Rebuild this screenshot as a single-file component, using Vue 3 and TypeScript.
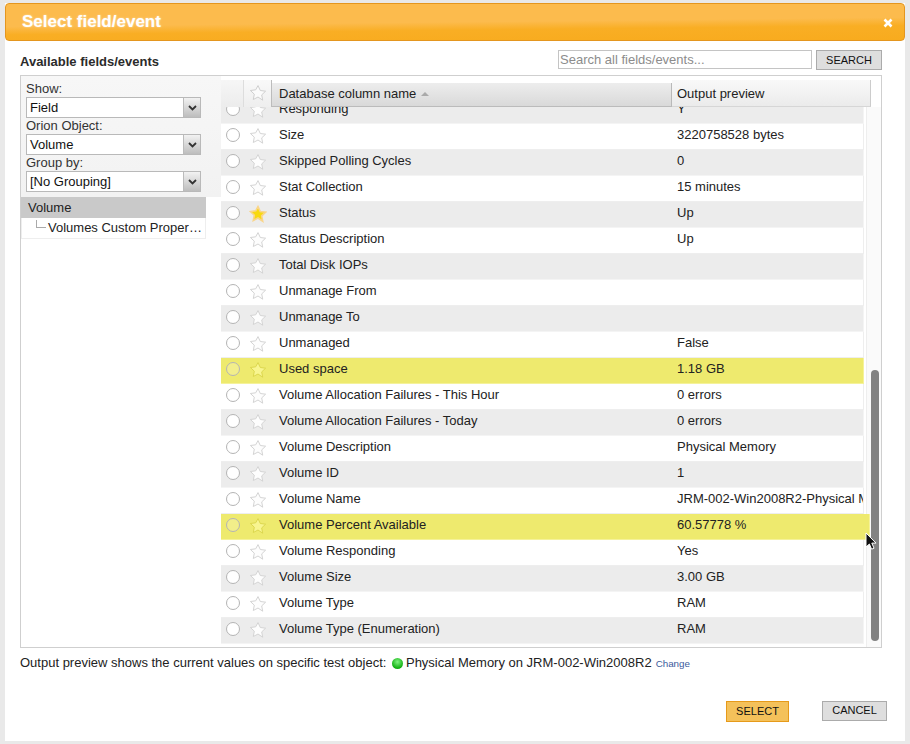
<script setup lang="ts">
interface Row { name: string; value: string; hl?: boolean; wide?: boolean; fav?: boolean }
const rows: Row[] = [
  { name: 'Responding', value: 'Y' },
  { name: 'Size', value: '3220758528 bytes' },
  { name: 'Skipped Polling Cycles', value: '0' },
  { name: 'Stat Collection', value: '15 minutes' },
  { name: 'Status', value: 'Up', fav: true },
  { name: 'Status Description', value: 'Up' },
  { name: 'Total Disk IOPs', value: '' },
  { name: 'Unmanage From', value: '' },
  { name: 'Unmanage To', value: '' },
  { name: 'Unmanaged', value: 'False' },
  { name: 'Used space', value: '1.18 GB', hl: true },
  { name: 'Volume Allocation Failures - This Hour', value: '0 errors' },
  { name: 'Volume Allocation Failures - Today', value: '0 errors' },
  { name: 'Volume Description', value: 'Physical Memory' },
  { name: 'Volume ID', value: '1' },
  { name: 'Volume Name', value: 'JRM-002-Win2008R2-Physical Memory' },
  { name: 'Volume Percent Available', value: '60.57778 %', hl: true, wide: true },
  { name: 'Volume Responding', value: 'Yes' },
  { name: 'Volume Size', value: '3.00 GB' },
  { name: 'Volume Type', value: 'RAM' },
  { name: 'Volume Type (Enumeration)', value: 'RAM' },
]
const filters = [
  { label: 'Show:', value: 'Field' },
  { label: 'Orion Object:', value: 'Volume' },
  { label: 'Group by:', value: '[No Grouping]' },
]
const star = 'M9 1.6l2.3 4.9 5.3.7-3.9 3.7 1 5.3L9 13l-4.7 2.5 1-5.3-3.9-3.7 5.3-.7z'
</script>

<template>
  <div class="page">
    <div class="dialog">
      <header class="title">
        <h1>Select field/event</h1>
        <svg class="close" width="10" height="10" viewBox="0 0 10 10"><path d="M1.5 1.5l7 7M8.5 1.5l-7 7" stroke="#fff" stroke-width="2.6" /></svg>
      </header>

      <div class="toolbar">
        <h2>Available fields/events</h2>
        <input class="search" placeholder="Search all fields/events..." />
        <button class="btn search-btn">SEARCH</button>
      </div>

      <div class="panel">
        <aside class="side">
          <div class="filters">
            <div v-for="f in filters" :key="f.label" class="filter">
              <label>{{ f.label }}</label>
              <div class="select">
                <span>{{ f.value }}</span>
                <i class="arrow">
                  <svg width="9" height="6" viewBox="0 0 9 6"><path d="M1 1l3.5 3.5L8 1" fill="none" stroke="#333" stroke-width="1.8" /></svg>
                </i>
              </div>
            </div>
          </div>
          <div class="tree">
            <div class="tree-root">Volume</div>
            <div class="tree-child">
              <span class="elbow"></span>
              <span>Volumes Custom Proper…</span>
            </div>
          </div>
        </aside>

        <section class="grid">
          <div class="head">
            <div class="hc hc-radio"></div>
            <div class="hc hc-star">
              <svg width="18" height="18" viewBox="0 0 18 18"><path :d="star" fill="#fbfbfb" stroke="#cfcfcf" /></svg>
            </div>
            <div class="hc hc-name">Database column name <span class="sort"></span></div>
            <div class="hc hc-out">Output preview</div>
          </div>
          <div class="body">
            <div class="rows">
              <div
                v-for="(r, i) in rows"
                :key="r.name"
                class="row"
                :class="{ odd: i % 2 === 0, hl: r.hl, wide: r.wide }"
              >
                <span class="radio"></span>
                <span class="star-cell">
                  <svg width="18" height="18" viewBox="0 0 18 18">
                    <path v-if="r.fav" :d="star" fill="#f8d90f" stroke="#f9d58a" stroke-width="1.6" />
                    <path v-else :d="star" :fill="r.hl ? '#f8f590' : '#fdfdfd'" :stroke="r.hl ? '#dcd74e' : '#d4d4d4'" />
                  </svg>
                </span>
                <span class="name">{{ r.name }}</span>
                <span class="value">{{ r.value }}</span>
              </div>
            </div>
            <div class="track"><div class="thumb"></div></div>
          </div>
        </section>
      </div>

      <p class="note">
        Output preview shows the current values on specific test object:
        <i class="dot"></i><span class="obj">Physical Memory on JRM-002-Win2008R2</span>
        <a class="change">Change</a>
      </p>

      <footer class="actions">
        <button class="btn select">SELECT</button>
        <button class="btn cancel">CANCEL</button>
      </footer>
    </div>

    <svg class="cursor" width="12" height="19" viewBox="0 0 12 19">
      <path d="M1 1v14l3.4-3 2.2 5.2 2.4-1-2.2-5.1H11z" fill="#111" stroke="#fff" stroke-width="1" />
    </svg>
  </div>
</template>

<style>
html, body { margin: 0; background: #e9e9e9; }
</style>

<style scoped>
.page {
  position: relative;
  width: 910px;
  height: 744px;
  overflow: hidden;
  background: #e9e9e9;
  padding: 3px 5px;
  box-sizing: border-box;
  font-family: "Liberation Sans", Arial, sans-serif;
  font-size: 13px;
  color: #222;
}
.dialog {
  background: #fff;
  height: 738px;
  display: flex;
  flex-direction: column;
}
.title {
  height: 38px;
  box-sizing: border-box;
  border: 1px solid #e4961f;
  border-radius: 4px;
  background: linear-gradient(179.4deg, #fcbb4d 0 50%, #f9ae24 68%, #f8ab1e 100%);
  display: flex;
  align-items: center;
  justify-content: space-between;
  padding: 0 11px 0 16px;
}
.title h1 {
  margin: 0 0 1px;
  font-size: 17px;
  font-weight: bold;
  color: #fff;
  text-shadow: 0 0 2px rgba(255, 255, 255, .6);
}
.close { margin-top: 2px; }
.toolbar {
  height: 34px;
  margin: 0 23px 0 15px;
  display: flex;
  align-items: flex-start;
}
.toolbar h2 {
  margin: 13px auto 0 0;
  font-size: 13px;
  line-height: 15px;
  font-weight: bold;
  color: #2b2b2b;
}
.search {
  width: 254px;
  height: 19px;
  margin-top: 9px;
  box-sizing: border-box;
  border: 1px solid #c4c4c4;
  padding: 0 1px;
  font: 13px "Liberation Sans", Arial, sans-serif;
  outline: none;
}
.search::placeholder { color: #8c8c8c; opacity: 1; }
.btn {
  box-sizing: border-box;
  height: 20px;
  padding: 0;
  font: 11px "Liberation Sans", Arial, sans-serif;
  color: #111;
  background: #dedede;
  border: 1px solid #ababab;
}
.search-btn { width: 66px; margin: 9px 0 0 4px; }
.panel {
  height: 573px;
  margin: 0 23px 0 15px;
  box-sizing: border-box;
  border: 1px solid #cfcfcf;
  display: flex;
}
.side { width: 200px; flex: none; }
.filters {
  height: 121px;
  box-sizing: border-box;
  padding: 5px 5px 0;
  background: linear-gradient(#f7f7f7, #f2f2f2);
}
.filter { height: 37px; }
.filter label { display: block; height: 16px; line-height: 15px; color: #333; }
.select {
  width: 175px;
  height: 21px;
  box-sizing: border-box;
  border: 1px solid #b9b9b9;
  background: #fff;
  display: flex;
  align-items: center;
  justify-content: space-between;
  padding-left: 3px;
  color: #111;
}
.arrow {
  width: 16px;
  height: 19px;
  border-left: 1px solid #bbb;
  background: linear-gradient(#f2f2f2, #bdbdbd);
  display: flex;
  align-items: center;
  justify-content: center;
}
.tree { width: 185px; }
.tree-root {
  height: 21px;
  line-height: 22px;
  padding-left: 7px;
  background: #c9c9c9;
  color: #222;
}
.tree-child {
  height: 21px;
  line-height: 20px;
  display: flex;
  padding-left: 14px;
  border: 1px solid #eee;
  border-top: 0;
  box-sizing: border-box;
  white-space: nowrap;
}
.elbow {
  width: 9px;
  height: 7px;
  margin: 2px 2px 0 0;
  border-left: 1px solid #aaa;
  border-bottom: 1px solid #aaa;
  flex: none;
}
.grid { flex: 1; min-width: 0; display: flex; flex-direction: column; }
.head {
  height: 31px;
  flex: none;
  display: flex;
  padding-top: 4px;
  box-sizing: border-box;
  background: #fff;
  position: relative;
  z-index: 2;
}
.hc { box-sizing: border-box; height: 27px; }
.hc-radio { width: 23px; background: linear-gradient(#f6f6f6, #ececec); border-right: 1px solid #ddd; }
.hc-star {
  width: 28px;
  background: linear-gradient(#f9f9f9, #eeeeee);
  border-right: 1px solid #bcbcbc;
  display: flex;
  align-items: center;
  justify-content: center;
  padding-bottom: 2px;
}
.hc-name {
  width: 400px;
  margin-top: 3px;
  height: 24px;
  line-height: 22px;
  padding-left: 7px;
  background: linear-gradient(#ededed, #d9d9d9);
  border-right: 1px solid #b9b9b9;
  border-bottom: 1px solid #bbb;
}
.sort {
  display: inline-block;
  margin-left: 1px;
  vertical-align: 2px;
  border: 4px solid transparent;
  border-top: 0;
  border-bottom: 4px solid #aaa;
}
.hc-out {
  width: 199px;
  line-height: 28px;
  padding-left: 5px;
  background: linear-gradient(#f9f9f9, #ebebeb);
  border-right: 1px solid #ccc;
  border-bottom: 1px solid #d6d6d6;
}
.body { flex: 1; position: relative; overflow: hidden; }
.rows { margin-top: -9px; }
.row {
  width: 643px;
  height: 26px;
  box-sizing: border-box;
  display: flex;
  align-items: flex-start;
  padding-top: 3px;
  background: #fff;
  border-right: 1px solid #eee;
  border-bottom: 1px solid #eee;
  overflow: hidden;
  white-space: nowrap;
  color: #222;
}
.row.odd { background: #ececec; border-color: #f4f4f4; }
.row.hl { background: #eeea6e; border-color: #f5f29a; }
.row.wide { width: 649px; position: relative; z-index: 1; }
.radio {
  flex: none;
  width: 14px;
  height: 14px;
  margin: 1px 4px 0 5px;
  box-sizing: border-box;
  border: 1px solid #b4b4b4;
  border-radius: 50%;
  background: #fff;
}
.row.hl .radio { background: #f2ee8a; }
.star-cell { flex: none; width: 35px; height: 18px; }
.star-cell svg { display: block; margin-left: 5px; }
.name { flex: none; width: 398px; line-height: 14px; margin-top: 1px; }
.value { flex: none; width: 300px; line-height: 14px; margin-top: 1px; }
.track {
  position: absolute;
  right: 0;
  top: 0;
  bottom: 0;
  width: 15px;
  border-left: 1px solid #eee;
  background: #fafafa;
  box-sizing: border-box;
}
.thumb {
  position: absolute;
  left: 4px;
  top: 263px;
  width: 8px;
  height: 271px;
  border-radius: 4px;
  background: #828282;
  z-index: 2;
}
.note {
  margin: 8px 0 0 15px;
  height: 14px;
  line-height: 14px;
  white-space: nowrap;
  color: #222;
}
.dot {
  display: inline-block;
  width: 11px;
  height: 11px;
  border-radius: 50%;
  vertical-align: -2px;
  margin: 0 3px 0 2px;
  background: radial-gradient(circle at 50% 35%, #7ff27f, #10b010 70%);
}
.change { font-size: 9.8px; color: #3a5a9c; margin-left: 4px; }
.actions {
  margin-top: 31px;
  margin-right: 18px;
  display: flex;
  justify-content: flex-end;
  gap: 33px;
}
.actions .btn { padding-bottom: 2px; }
.btn.select {
  display: block;
  width: 63px;
  padding-right: 3px;
  background: #f4c15a;
  border-color: #e69a1a;
}
.cancel { width: 65px; }
.cursor { position: absolute; left: 865px; top: 532px; z-index: 3; }
</style>
